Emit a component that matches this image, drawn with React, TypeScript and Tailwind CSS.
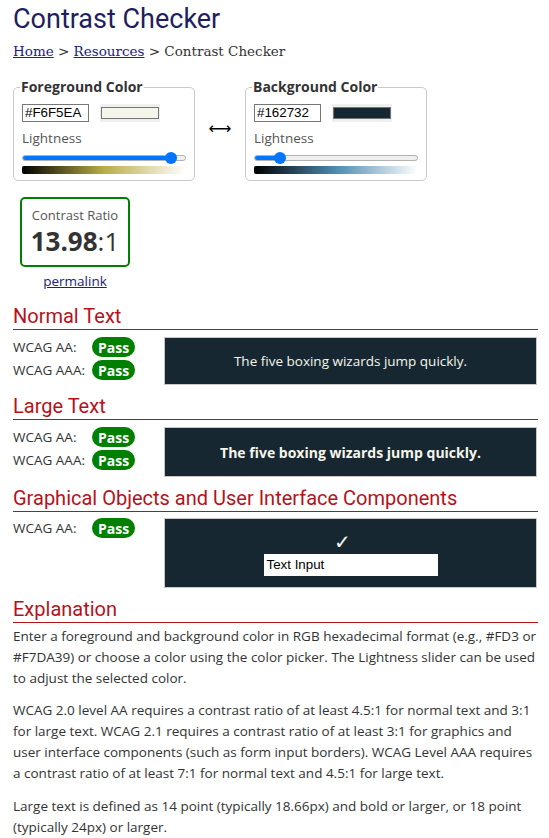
import React from "react";

const body = "font-['Open_Sans',sans-serif]";

function Slider({ value }: { value: number }) {
  return (
    <div className="relative mt-[3px] flex h-[12px] items-center">
      <div className="h-[6px] w-full overflow-hidden rounded-full border border-[#b2b2b2] bg-[#efefef]">
        <div className="h-full bg-[#0075ff]" style={{ width: `${value}%` }} />
      </div>
      <div
        className="absolute top-0 h-[12px] w-[12px] rounded-full bg-[#0075ff]"
        style={{ left: `calc(${value}% - 6px)` }}
      />
    </div>
  );
}

function ColorBox({
  legend,
  hex,
  value,
  gradient,
}: {
  legend: string;
  hex: string;
  value: number;
  gradient: string;
}) {
  return (
    <fieldset className="w-[182px] rounded-[5px] border border-[#c8c8c8] px-[8px] pb-[6px]">
      <legend className="ml-[-2px] px-[1px] text-[14px] leading-[20px] font-bold text-[#333]">{legend}</legend>
      <div className="mt-[7px] flex items-center gap-[11px]">
        <input
          readOnly
          value={hex}
          className="h-[18px] w-[67px] border border-[#767676] px-[2px] font-['Liberation_Sans',Arial,sans-serif] text-[13.33px] text-black outline-none"
        />
        <div className="flex h-[18px] w-[60px] items-center justify-center bg-[#efefef]">
          <div className="h-[12px] w-[58px] border border-[#767676]" style={{ background: hex }} />
        </div>
      </div>
      <div className="mt-[6px] text-[13.5px] leading-[21px] text-[#555]">Lightness</div>
      <Slider value={value} />
      <div className="mt-[2px] h-[8px] rounded-[2px]" style={{ background: gradient }} />
    </fieldset>
  );
}

function Badge() {
  return (
    <span className="inline-flex h-[20px] items-center rounded-full bg-[#008000] px-[6px] text-[14px] font-bold text-white">
      Pass
    </span>
  );
}

function Row({ label }: { label: string }) {
  return (
    <div className="flex h-[20px] items-center">
      <span className="w-[79px] text-[13.5px] text-[#333]">{label}</span>
      <Badge />
    </div>
  );
}

function Heading({ children, first }: { children: React.ReactNode; first?: boolean }) {
  return (
    <h2
      className={
        (first ? "mt-[11px] " : "mt-[8px] ") +
        "border-b border-[#b5121b] font-['Roboto',sans-serif] text-[20px] leading-[26px] text-[#b5121b]"
      }
    >
      {children}
    </h2>
  );
}

export default function App() {
  return (
    <div className={`${body} min-h-[838px] w-[549px] bg-white pr-[11px] pl-[13px] pt-[3px] text-[#333]`}>
      <h1 className="font-['Roboto',sans-serif] text-[27px] leading-[32px] text-[#1f1f5f]">Contrast Checker</h1>
      <nav className="mt-[6px] font-['DejaVu_Serif',serif] text-[13.5px] leading-[20px] text-[#333]">
        <a href="#" className="text-[#21217a] underline">Home</a> &gt;{" "}
        <a href="#" className="text-[#21217a] underline">Resources</a> &gt; Contrast Checker
      </nav>

      <div className="mt-[16px] flex items-center">
        <ColorBox
          legend="Foreground Color"
          hex="#F6F5EA"
          value={91}
          gradient="linear-gradient(to right, #000, #b9ad46 50%, #fff)"
        />
        <div className="flex w-[50px] justify-center font-['DejaVu_Sans',sans-serif] text-[16px] leading-[30px] text-black">
          ⟷
        </div>
        <ColorBox
          legend="Background Color"
          hex="#162732"
          value={16}
          gradient="linear-gradient(to right, #000, #4e8bb1 50%, #fff)"
        />
      </div>

      <div className="ml-[7px] mt-[16px] w-[110px]">
        <div className="flex h-[70px] flex-col items-center justify-center rounded-[5px] border-2 border-[#008000]">
          <div className="text-[13px] leading-[18px] text-[#555]">Contrast Ratio</div>
          <div className="text-[26px] leading-[34px] text-[#333]">
            <span className="font-bold">13.98</span>:1
          </div>
        </div>
        <div className="mt-[4px] text-center text-[13.5px] leading-[21px]">
          <a href="#" className="text-[#21217a] underline">permalink</a>
        </div>
      </div>

      <Heading first>Normal Text</Heading>
      <div className="mt-[7px] flex">
        <div className="flex w-[151px] flex-col gap-[3px]">
          <Row label="WCAG AA:" />
          <Row label="WCAG AAA:" />
        </div>
        <div className="flex h-[48px] w-[373px] items-center justify-center border border-[#c8c8c8] bg-[#162732] text-[13.5px] text-[#F6F5EA]">
          The five boxing wizards jump quickly.
        </div>
      </div>

      <Heading>Large Text</Heading>
      <div className="mt-[7px] flex">
        <div className="flex w-[151px] flex-col gap-[3px]">
          <Row label="WCAG AA:" />
          <Row label="WCAG AAA:" />
        </div>
        <div className="flex h-[50px] w-[373px] items-center justify-center border border-[#c8c8c8] bg-[#162732] text-[14px] font-bold text-[#F6F5EA]">
          The five boxing wizards jump quickly.
        </div>
      </div>

      <Heading>Graphical Objects and User Interface Components</Heading>
      <div className="mt-[6px] flex">
        <div className="flex w-[151px] flex-col">
          <Row label="WCAG AA:" />
        </div>
        <div className="flex h-[70px] w-[373px] flex-col items-center justify-center border border-[#c8c8c8] bg-[#162732] pt-[1px]">
          <div className="mb-[2px] pr-[16px] font-['DejaVu_Sans',sans-serif] text-[20px] leading-[20px] text-[#F6F5EA]">✓</div>
          <div className="flex h-[22px] w-[174px] items-center bg-white px-[3px] font-['Liberation_Sans',Arial,sans-serif] text-[13.33px] text-black">
            Text Input
          </div>
        </div>
      </div>

      <Heading>Explanation</Heading>
      <div className="mt-[3px] text-[13.5px] leading-[21px] text-[#333]">
        <p>
          Enter a foreground and background color in RGB hexadecimal format (e.g., #FD3 or #F7DA39) or choose a
          color using the color picker. The Lightness slider can be used to adjust the selected color.
        </p>
        <p className="mt-[11px]">
          WCAG 2.0 level AA requires a contrast ratio of at least 4.5:1 for normal text and 3:1 for large text. WCAG
          2.1 requires a contrast ratio of at least 3:1 for graphics and user interface components (such as form input
          borders). WCAG Level AAA requires a contrast ratio of at least 7:1 for normal text and 4.5:1 for large text.
        </p>
        <p className="mt-[12px]">
          Large text is defined as 14 point (typically 18.66px) and bold or larger, or 18 point (typically 24px) or
          larger.
        </p>
      </div>
    </div>
  );
}
